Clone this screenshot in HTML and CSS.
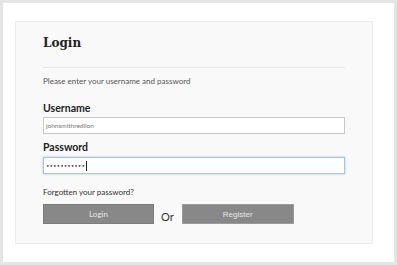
FILE: index.html
```html
<!DOCTYPE html>
<html lang="en">
<head>
    <meta charset="UTF-8">
    <meta name="viewport" content="width=device-width, initial-scale=1.0">
    <title>Login</title>
    <link rel="stylesheet" href="styles.css">
</head>
<body>
    <div class="frame">
        <div class="login-panel">
            <h1>Login</h1>
            <hr>
            <p class="intro">Please enter your username and password</p>

            <label class="field-label">Username</label>
            <div class="field">johnsmithredlion</div>

            <label class="field-label pass-label">Password</label>
            <div class="field field-focus"><span class="dots">•••••••••••</span><span class="caret"></span></div>

            <a class="forgot" href="#">Forgotten your password?</a>

            <div class="actions">
                <button class="btn btn-login">Login</button>
                <span class="or">Or</span>
                <button class="btn btn-register">Register</button>
            </div>
        </div>
    </div>
</body>
</html>
```

FILE: styles.css
```css
/* Login page */
* {
    margin: 0;
    padding: 0;
    box-sizing: border-box;
    font-family: Lato, "Open Sans", sans-serif;
}

body {
    background-color: #e5e5e5;
    padding: 3px;
}

.frame {
    background-color: #fff;
    padding: 18px 21px 18px 12px;
}

.login-panel {
    background-color: #f9f9f9;
    border: 1px solid #ececec;
    padding: 13px 27px 19px 27px;
}

.login-panel h1 {
    font-family: "DejaVu Serif", serif;
    font-size: 12px;
    line-height: 16px;
    color: #222;
}

.login-panel hr {
    border: none;
    border-top: 1px solid #e9e9e9;
    margin-top: 16px;
}

.intro {
    font-size: 8px;
    line-height: 12px;
    color: #555;
    margin-top: 7px;
}

.field-label {
    display: block;
    font-weight: bold;
    font-size: 10.5px;
    line-height: 14px;
    color: #222;
    margin-top: 14px;
}

.pass-label {
    margin-top: 6px;
}

.field {
    height: 17px;
    margin-top: 2px;
    background-color: #fff;
    border: 1px solid #c9c9c9;
    padding: 0 2px;
    font-size: 6.5px;
    line-height: 15px;
    color: #777;
    display: flex;
    align-items: center;
}

.field-focus {
    margin-top: 3px;
    border-color: #a9c4e4;
    box-shadow: 0 0 2px rgba(110, 160, 220, 0.6);
}

.dots {
    font-family: "DejaVu Sans", sans-serif;
    font-size: 6px;
    color: #333;
}

.caret {
    width: 1px;
    height: 10px;
    background-color: #222;
    margin-left: 1px;
}

.forgot {
    display: block;
    margin-top: 13px;
    font-size: 8px;
    line-height: 11px;
    color: #333;
    text-decoration: none;
}

.actions {
    display: flex;
    align-items: center;
    margin-top: 6px;
}

.btn {
    width: 111px;
    height: 20px;
    background-color: #888;
    border: 1px solid #7c7c7c;
    color: #e6e6e6;
    font-size: 8px;
    cursor: pointer;
}

.btn-register {
    width: 112px;
    font-family: "Liberation Sans", Arial, sans-serif;
    border-color: #9a9a9a;
}

.or {
    font-size: 11px;
    color: #333;
    margin: 4px 8px 0 7px;
}
```
